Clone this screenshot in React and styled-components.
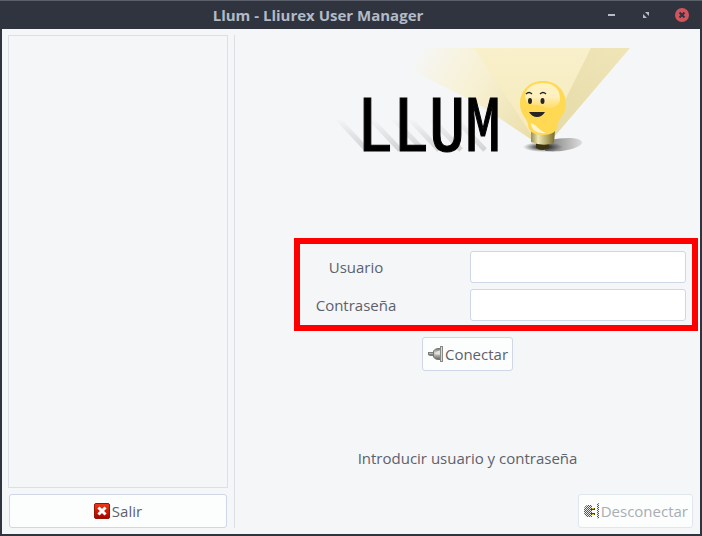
import React from 'react';
import styled, { createGlobalStyle } from 'styled-components';

const GlobalStyle = createGlobalStyle`
  * {
    box-sizing: border-box;
  }

  body {
    margin: 0;
    background: #2f343f;
    color: #5c616c;
    font-family: "Open Sans", "Noto Sans", sans-serif;
    font-size: 15px;
    line-height: 20px;
  }

  button, input {
    font: inherit;
    color: inherit;
  }
`;

const Window = styled.div`
  min-height: 100vh;
  display: flex;
  flex-direction: column;
  background: #2f343f;
`;

const TitleBar = styled.header`
  display: flex;
  align-items: center;
  height: 29px;
  padding-right: 3px;
  border-top: 1px solid #5b606b;
`;

const Title = styled.h1`
  flex: 1;
  margin: 0;
  padding-left: 42px;
  text-align: center;
  color: #b3bac7;
  font-size: 15px;
  font-weight: 700;
`;

const WindowButton = styled.button`
  width: 35px;
  height: 24px;
  padding: 0;
  display: flex;
  align-items: center;
  justify-content: center;
  border: 0;
  background: none;
`;

const Content = styled.main`
  flex: 1;
  display: flex;
  gap: 6px;
  margin: 0 2px 2px;
  padding: 6px 2px 6px 6px;
  background: #f5f6f8;
`;

const Sidebar = styled.aside`
  width: 220px;
  display: flex;
  flex-direction: column;
  gap: 6px;
`;

const MenuPanel = styled.div`
  flex: 1;
  border: 1px solid #dcdfe3;
`;

const Divider = styled.div`
  width: 1px;
  background: #dcdfe3;
`;

const LoginPane = styled.section`
  flex: 1;
  display: flex;
  flex-direction: column;
`;

const Centered = styled.div`
  display: flex;
  justify-content: center;
  padding-right: 4px;
  margin-top: ${({ $top }) => $top}px;
`;

const Footer = styled.footer`
  display: flex;
  justify-content: flex-end;
  margin-top: auto;
  padding-right: 5px;
`;

const Button = styled.button`
  height: 34px;
  margin: ${({ $wide }) => ($wide ? '0 1px' : '0')};
  padding: 0 4px;
  display: flex;
  align-items: center;
  justify-content: center;
  gap: 1px;
  border: 1px solid #cfd6e6;
  border-radius: 3px;
  background: #fcfdfd;

  &:disabled {
    color: #a9adb4;
    border-color: #e1e5ee;
  }
`;

const Fields = styled.form`
  margin: 58px 0 0 53px;
  padding: 7px 6px 4px 0;
  display: flex;
  flex-direction: column;
  gap: 6px;
  border: 6px solid #ff0000;
`;

const Field = styled.div`
  display: flex;
  align-items: center;
  justify-content: space-between;
`;

const Label = styled.label`
  width: 112px;
  text-align: center;
`;

const Input = styled.input`
  width: 216px;
  height: 32px;
  padding: 0 8px;
  border: 1px solid #cfd6e6;
  border-radius: 3px;
  background: #ffffff;
`;

const Status = styled.p`
  margin: 0;
`;

const LogoText = styled.text`
  font-family: "Noto Sans CJK SC", sans-serif;
  font-size: 72px;
  font-weight: 400;
  font-feature-settings: "hwid";
  fill: #000;
  stroke: #000;
  stroke-width: 1px;
`;

const SHADOWS = [338, 371, 394, 410, 432, 456];

const LlumLogo = () => (
  <svg width="340" height="140" viewBox="298 40 340 140" role="img" aria-label="LLUM">
    <defs>
      <linearGradient id="beamLeft" gradientUnits="userSpaceOnUse" x1="412" y1="60" x2="540" y2="135">
        <stop offset="0" stopColor="#fbf1bd" stopOpacity="0" />
        <stop offset="0.45" stopColor="#f8efcb" stopOpacity="0.8" />
        <stop offset="1" stopColor="#e8dca4" />
      </linearGradient>
      <linearGradient id="beamRight" gradientUnits="userSpaceOnUse" x1="610" y1="48" x2="545" y2="135">
        <stop offset="0" stopColor="#eee4b6" />
        <stop offset="1" stopColor="#e5daa8" />
      </linearGradient>
      <linearGradient id="beamMid" x1="0" y1="0" x2="0" y2="1">
        <stop offset="0" stopColor="#f9f0cc" />
        <stop offset="1" stopColor="#f5eaba" />
      </linearGradient>
      <linearGradient id="castShadow" gradientUnits="userSpaceOnUse" x1="0" y1="118" x2="0" y2="151">
        <stop offset="0" stopColor="#777" stopOpacity="0" />
        <stop offset="1" stopColor="#777" stopOpacity="0.28" />
      </linearGradient>
      <linearGradient id="metal" x1="0" y1="0" x2="1" y2="0">
        <stop offset="0" stopColor="#9b9050" />
        <stop offset="0.3" stopColor="#eee7b8" />
        <stop offset="0.65" stopColor="#b5ab6d" />
        <stop offset="1" stopColor="#756a2c" />
      </linearGradient>
      <linearGradient id="shine" x1="0" y1="0" x2="0" y2="1">
        <stop offset="0" stopColor="#fffbed" stopOpacity="0.7" />
        <stop offset="0.55" stopColor="#fff4d2" stopOpacity="0.85" />
        <stop offset="1" stopColor="#ffe796" stopOpacity="0.4" />
      </linearGradient>
      <linearGradient id="floor" x1="0" y1="0" x2="1" y2="0">
        <stop offset="0" stopColor="#777" />
        <stop offset="1" stopColor="#ddd" />
      </linearGradient>
      <radialGradient id="baseShadow">
        <stop offset="0.25" stopColor="#222" stopOpacity="0.9" />
        <stop offset="1" stopColor="#444" stopOpacity="0" />
      </radialGradient>
    </defs>
    <path d="M412 48H475L540 140L532 140L478 104L410 69Z" fill="url(#beamLeft)" />
    <path d="M590 48H630L554 137H542Z" fill="url(#beamRight)" />
    <path d="M474 48H591L545 140H535Z" fill="url(#beamMid)" />
    <g stroke="url(#castShadow)" strokeWidth="5">
      {SHADOWS.map((x) => (
        <path key={x} d={`M${x} 119L${x + 29} 150`} />
      ))}
    </g>
    <LogoText x="429" y="151" textAnchor="middle">LLUM</LogoText>
    <path d="M545 151C565 153 583 147 582 142C580 137 565 137 549 140Z" fill="url(#floor)" />
    <ellipse cx="543" cy="147" rx="20" ry="5" fill="url(#baseShadow)" />
    <path d="M536 143H549V148Q542 152 536 148Z" fill="#3c3410" />
    <path d="M531 131H555L554 143Q543 147 531 142Z" fill="url(#metal)" />
    <path
      d="M543 81C529 81 520 91 520 104C520 114 526 117 528 124C528 131 533 135 543 135C553 135 557 131 558 124C559 117 566 114 566 104C566 91 557 81 543 81Z"
      fill="#ffd954"
    />
    <path d="M543 83C532 83 525 89 525 97C527 108 537 103 544 107C552 110 560 106 560 99C560 88 553 83 543 83Z" fill="url(#shine)" />
    <path d="M531 123C531 130 537 134 546 133C538 130 537 125 531 123Z" fill="#fff4ce" />
    <ellipse cx="530" cy="101" rx="2" ry="3" fill="#252525" />
    <ellipse cx="542.5" cy="101" rx="2" ry="3" fill="#252525" />
    <path d="M526 94Q529 91 532 94M540 94Q543 91 546 94" fill="none" stroke="#252525" strokeWidth="1.3" />
    <path d="M529 112H545Q542 117 537 117Q532 117 529 112Z" fill="#252525" />
  </svg>
);

const ExitIcon = () => (
  <svg width="17" height="16" viewBox="0 0 17 16" aria-hidden="true">
    <defs>
      <linearGradient id="exitRed" x1="0" y1="0" x2="0" y2="1">
        <stop offset="0" stopColor="#ef3b16" />
        <stop offset="0.5" stopColor="#cf1c08" />
        <stop offset="1" stopColor="#a40000" />
      </linearGradient>
    </defs>
    <rect x="0.5" y="0.5" width="15" height="15" rx="1.5" fill="url(#exitRed)" stroke="#971308" />
    <path d="M5.5 5.5L10.5 10.5M10.5 5.5L5.5 10.5" stroke="#fff" strokeWidth="3" strokeLinecap="square" />
  </svg>
);

const ConnectIcon = () => (
  <svg width="17" height="18" viewBox="0 0 17 18" aria-hidden="true">
    <defs>
      <linearGradient id="plugGrey" x1="0" y1="0" x2="0" y2="1">
        <stop offset="0" stopColor="#777" />
        <stop offset="0.4" stopColor="#d6d6d3" />
        <stop offset="1" stopColor="#686865" />
      </linearGradient>
    </defs>
    <path d="M1 7H7V11H3L1 10Z" fill="#7d7d79" />
    <path d="M2 8.5H7" stroke="#b5b5b1" />
    <path d="M6.5 6Q8 3.5 11 3.5H13.5V14.5H11Q8 14.5 6.5 12Z" fill="url(#plugGrey)" stroke="#777773" />
    <path d="M8.5 8Q10 5.5 13 5.5V9.5H8.5Z" fill="#e2e2de" />
    <rect x="13.5" y="1.5" width="2" height="15" fill="#d8d8d4" stroke="#898985" />
  </svg>
);

const DisconnectIcon = () => (
  <svg width="17" height="18" viewBox="0 0 17 18" aria-hidden="true">
    <defs>
      <pattern id="dither" width="2" height="2" patternUnits="userSpaceOnUse">
        <rect width="2" height="2" fill="#ededeb" />
        <rect width="1" height="1" fill="#555553" />
        <rect x="1" y="1" width="1" height="1" fill="#555553" />
      </pattern>
    </defs>
    <path d="M1 7Q2 3 5 3H9V15H5Q2 15 1 11Z" fill="url(#dither)" />
    <path d="M8 6H12V8H8ZM8 11H12V13H8Z" fill="#4b4718" />
    <path d="M9 6H11V7H9ZM9 12H11V13H9Z" fill="#d9c52e" />
    <path d="M14 2L16 1V17L14 16Z" fill="url(#dither)" />
  </svg>
);

const MinimizeIcon = () => (
  <svg width="7" height="7" viewBox="0 0 7 7" aria-hidden="true">
    <rect y="2" width="7" height="2" fill="#b7bcc6" />
  </svg>
);

const MaximizeIcon = () => (
  <svg width="7" height="7" viewBox="0 0 7 7" aria-hidden="true">
    <path d="M2 0H6V4ZM0 2V6H4Z" fill="#b7bcc6" />
  </svg>
);

const CloseIcon = () => (
  <svg width="14" height="14" viewBox="0 0 14 14" aria-hidden="true">
    <circle cx="7" cy="7" r="7" fill="#d2555d" />
    <path d="M4.5 4.5L9.5 9.5M9.5 4.5L4.5 9.5" stroke="#2f343f" strokeWidth="2" />
  </svg>
);

const App = () => {
  return (
    <>
      <GlobalStyle />
      <Window>
        <TitleBar>
          <Title>Llum - Lliurex User Manager</Title>
          <WindowButton aria-label="Minimizar"><MinimizeIcon /></WindowButton>
          <WindowButton aria-label="Maximizar"><MaximizeIcon /></WindowButton>
          <WindowButton aria-label="Cerrar"><CloseIcon /></WindowButton>
        </TitleBar>
        <Content>
          <Sidebar>
            <MenuPanel />
            <Button $wide>
              <ExitIcon />
              Salir
            </Button>
          </Sidebar>
          <Divider />
          <LoginPane>
            <Centered $top={5}>
              <LlumLogo />
            </Centered>
            <Fields id="login" onSubmit={(e) => e.preventDefault()}>
              <Field>
                <Label htmlFor="user">Usuario</Label>
                <Input id="user" type="text" />
              </Field>
              <Field>
                <Label htmlFor="password">Contraseña</Label>
                <Input id="password" type="password" />
              </Field>
            </Fields>
            <Centered $top={6}>
              <Button type="submit" form="login">
                <ConnectIcon />
                Conectar
              </Button>
            </Centered>
            <Centered $top={77}>
              <Status>Introducir usuario y contraseña</Status>
            </Centered>
            <Footer>
              <Button disabled>
                <DisconnectIcon />
                Desconectar
              </Button>
            </Footer>
          </LoginPane>
        </Content>
      </Window>
    </>
  );
};

export default App;
